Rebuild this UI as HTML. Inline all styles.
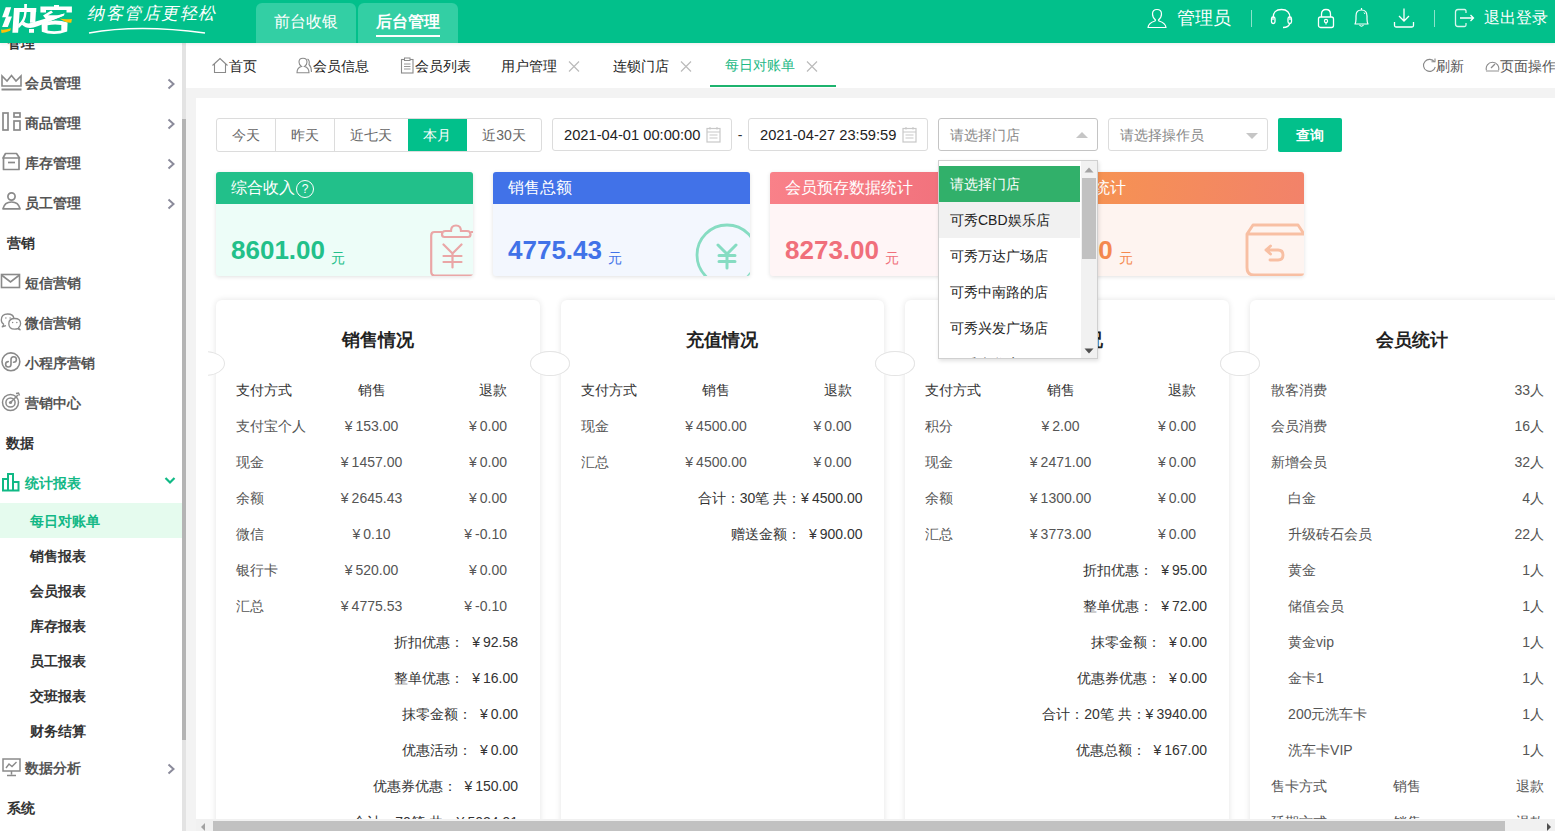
<!DOCTYPE html>
<html><head><meta charset="utf-8">
<style>
*{box-sizing:border-box;margin:0;padding:0}
html,body{width:1555px;height:831px;overflow:hidden;background:#fff;font-family:"Liberation Sans",sans-serif;font-size:14px;color:#333}
.a{position:absolute}
.t{position:absolute;white-space:nowrap;line-height:20px}
#hdr{left:0;top:0;width:1555px;height:43px;background:#02c08b;z-index:10;box-shadow:0 1px 3px rgba(0,0,0,.08)}
#side{left:0;top:0;width:182px;height:831px;background:#fff}
#sbar{left:182px;top:43px;width:4px;height:788px;background:#e3e3e3}
#sthumb{left:182px;top:119px;width:4px;height:621px;background:#b4b4b4}
#tabs{left:186px;top:43px;width:1369px;height:45px;background:#fff}
#gray{left:186px;top:88px;width:1369px;height:743px;background:#f3f3f3}
#panel{left:196px;top:98px;width:1359px;height:721px;background:#fff;overflow:hidden}
#hscroll{left:196px;top:819px;width:1359px;height:12px;background:#f1f1f1}
.side-i{color:#555;font-weight:bold}
.sec{color:#333;font-weight:bold}
.sub{color:#333;font-weight:bold}
.c{transform:translateX(-50%)}
.r{transform:translateX(-100%)}
.card{position:absolute;top:202px;width:323.7px;height:600px;background:#fff;border-radius:6px;box-shadow:0 0 6px rgba(0,0,0,.11)}
.notch{position:absolute;width:40px;height:25px;border-radius:50%;background:#fff;border:1px solid #e4e4e4;top:253px}
.sc{position:absolute;top:74px;width:257px;height:104px;border-radius:3px;overflow:hidden;box-shadow:0 1px 4px rgba(0,0,0,.12)}
.sch{position:absolute;left:0;top:0;width:257px;height:32px}
i{font-style:normal;margin-right:3px;font-size:14px}
.n{font-size:14.5px}
.dt{font-size:14.7px}
.inp{position:absolute;top:20px;height:33px;border:1px solid #dcdcdc;border-radius:3px;background:#fff}
</style></head><body>

<!-- HEADER -->
<div id="hdr" class="a">
  <svg class="a" style="left:0;top:0" width="80" height="43" viewBox="0 0 80 43">
<g fill="#fff">
<path d="M5.7 7.2 H11.2 L8.2 16.6 H12 L7.8 26.9 H2.1 L5.9 17.3 H2.1 Z"/>
<path d="M14 8 H20 L18.1 32.8 H12.4 Z"/>
<path d="M14 8 H36.2 V12 H14 Z"/>
<path d="M30.5 8 H36.2 L35.3 22.8 H30 Z"/>
<path d="M24.2 4 H27 L26.6 12.5 Q26 22 18.5 28.5 L18 24.5 Q24 20 24.2 12 Z"/>
<path d="M23.8 21.5 Q27 24.5 31.5 22.8 Q45 18.5 60 15 L64.5 13.5 L64 15.5 Q55 19 48 22 Q36 27.5 30 28 Q25.5 28 21.5 24.5 Z"/>
<path d="M29 29 H34 V32.8 H29 Z"/>
<path d="M40.4 6.5 H54 V5 H59 V6.5 H71.9 V12.4 H66.5 V10 H46 V12.4 H40.4 Z"/>
<path d="M43 15.5 L51.2 10.5 L53 12.5 L48 15.2 H58 L64.5 13.5 L63 16 L49 21.5 L47 20.5 Z"/>
<path d="M41.6 23.5 Q47 21 55 20.5 Q62 20.5 67.6 22.5 L67.2 31.5 Q60 34 54 34 Q47 34 41.8 31.8 Z M47.6 25.3 V30.5 Q54 32 61.3 30.5 V25 Q54 24 47.6 25.3 Z" fill-rule="evenodd"/>
</g>
<path d="M1 29.6 Q6 30 11 28.2 L10.2 30.8 Q6 32.8 1.5 33 Z" fill="#ffc107"/>
<path d="M59.6 18.6 Q64 19.5 71.9 19 L71.3 22.8 Q65.5 23 59.6 18.6 Z" fill="#ffc107"/>
</svg>
  <div class="t" style="left:87px;top:4px;font-size:17px;line-height:20px;color:#fff;letter-spacing:1.5px;font-style:italic;font-weight:300">纳客管店更轻松</div>
  <svg class="a" style="left:88px;top:26px" width="118" height="9"><path d="M1 7 Q 50 -2 117 7" stroke="#fff" stroke-width="1.6" fill="none"/></svg>
  <div class="a" style="left:256px;top:3px;width:100px;height:40px;background:#33cfa4;border-radius:6px 6px 0 0"></div>
  <div class="a" style="left:358px;top:3px;width:100px;height:40px;background:#33cfa4;border-radius:6px 6px 0 0"></div>
  <div class="t" style="left:274px;top:12px;font-size:16px;color:#fff;font-weight:500">前台收银</div>
  <div class="t" style="left:376px;top:12px;font-size:16px;color:#fff;font-weight:bold">后台管理</div>
  <div class="a" style="left:376px;top:35px;width:64px;height:2px;background:#fff"></div>
</div>



<div class="a" style="left:0;top:0;width:1555px;height:43px;z-index:11;pointer-events:none">
<svg class="a" style="left:1146px;top:8px" width="22" height="21" viewBox="0 0 22 21"><path d="M11 1.5 Q15.5 1.5 15.5 6 Q15.5 9.5 12.5 12 L13 13 Q19.5 15 20 19.5 H2 Q2.5 15 9 13 L9.5 12 Q6.5 9.5 6.5 6 Q6.5 1.5 11 1.5 Z" fill="none" stroke="#fff" stroke-width="1.2" stroke-linejoin="round"/></svg>
<div class="t" style="left:1177px;top:7px;font-size:18px;line-height:22px;color:#fff">管理员</div>
<div class="a" style="left:1251px;top:10px;width:1px;height:17px;background:rgba(255,255,255,.55)"></div>
<svg class="a" style="left:1270px;top:8px" width="23" height="21" viewBox="0 0 23 21"><path d="M3 12 V10 Q3 1.5 11.5 1.5 Q20 1.5 20 10 V12" fill="none" stroke="#fff" stroke-width="1.3"/><rect x="1.5" y="9" width="3.5" height="6.5" rx="1.7" fill="none" stroke="#fff" stroke-width="1.3"/><rect x="18" y="9" width="3.5" height="6.5" rx="1.7" fill="none" stroke="#fff" stroke-width="1.3"/><path d="M20 15 Q19 19.5 13 19.5" fill="none" stroke="#fff" stroke-width="1.3"/></svg>
<svg class="a" style="left:1317px;top:8px" width="18" height="21" viewBox="0 0 18 21"><path d="M4.5 9 V6 Q4.5 1.5 9 1.5 Q13.5 1.5 13.5 6 V9" fill="none" stroke="#fff" stroke-width="1.3"/><rect x="1.5" y="9" width="15" height="10.5" rx="2" fill="none" stroke="#fff" stroke-width="1.3"/><circle cx="9" cy="13" r="1.6" fill="none" stroke="#fff" stroke-width="1.2"/><path d="M9 14.6 V16.5" stroke="#fff" stroke-width="1.2"/></svg>
<svg class="a" style="left:1353px;top:7px" width="17" height="22" viewBox="0 0 17 22"><path d="M8.5 1 V2.5 M2 17 Q3 15 3 12 V9 Q3 3 8.5 3 Q14 3 14 9 V12 Q14 15 15 17 Z M6.5 18 Q8.5 20.5 10.5 18" fill="none" stroke="#fff" stroke-width="1.2" stroke-linejoin="round"/><path d="M11 5.5 L12 7" stroke="#fff" stroke-width="1"/></svg>
<svg class="a" style="left:1393px;top:7px" width="22" height="22" viewBox="0 0 22 22"><path d="M11 1.5 V14 M6 9 L11 14 L16 9" fill="none" stroke="#fff" stroke-width="1.3"/><path d="M1.5 15 V18.5 Q1.5 20 3 20 H19 Q20.5 20 20.5 18.5 V15" fill="none" stroke="#fff" stroke-width="1.3"/></svg>
<div class="a" style="left:1434px;top:10px;width:1px;height:17px;background:rgba(255,255,255,.55)"></div>
<svg class="a" style="left:1454px;top:8px" width="22" height="20" viewBox="0 0 22 20"><path d="M12 5 V3 Q12 1.5 10.5 1.5 H4 Q1.5 1.5 1.5 4 V16 Q1.5 18.5 4 18.5 H10.5 Q12 18.5 12 17 V15" fill="none" stroke="#fff" stroke-width="1.3" opacity=".85"/><path d="M6 10 H19.5 M16.5 7 L19.5 10 L16.5 13" fill="none" stroke="#fff" stroke-width="1.3"/></svg>
<div class="t" style="left:1484px;top:8px;font-size:16px;color:#fff">退出登录</div>
</div>

<div id="side" class="a"></div>
<div class="a" style="left:0;top:0;width:182px;height:831px;overflow:hidden">
  <div class="t sec" style="left:7px;top:33px">管理</div>
  <svg class="a" style="left:1px;top:74px" width="21" height="17" viewBox="0 0 21 17"><path d="M1 12 V2 L6 7 L10.5 1.5 L15 7 L20 2 V12 Z" fill="none" stroke="#8a8a8a" stroke-width="1.6"/><rect x="0.5" y="14.5" width="20" height="2" fill="#8a8a8a"/></svg>
  <div class="t side-i" style="left:25px;top:73px">会员管理</div>
  <svg class="a" style="left:167px;top:78px" width="9" height="12" viewBox="0 0 9 12"><path d="M1.5 1.5 L6.5 6 L1.5 10.5" fill="none" stroke="#8b8b9b" stroke-width="2"/></svg>
  <svg class="a" style="left:1px;top:112px" width="21" height="19" viewBox="0 0 21 19"><rect x="2" y="1" width="5" height="17" fill="none" stroke="#8a8a8a" stroke-width="1.7"/><rect x="13" y="1" width="6" height="4" fill="none" stroke="#8a8a8a" stroke-width="1.7"/><rect x="13" y="9" width="6" height="9" fill="none" stroke="#8a8a8a" stroke-width="1.7"/></svg>
  <div class="t side-i" style="left:25px;top:113px">商品管理</div>
  <svg class="a" style="left:167px;top:118px" width="9" height="12" viewBox="0 0 9 12"><path d="M1.5 1.5 L6.5 6 L1.5 10.5" fill="none" stroke="#8b8b9b" stroke-width="2"/></svg>
  <svg class="a" style="left:1px;top:152px" width="21" height="19" viewBox="0 0 21 19"><path d="M2 6 L4.5 1.5 H15.5 L18.5 6 Z" fill="none" stroke="#8a8a8a" stroke-width="1.7" stroke-linejoin="round"/><path d="M2.5 6 V17.5 H18 V6" fill="none" stroke="#8a8a8a" stroke-width="1.7" stroke-linejoin="round"/><path d="M7 10.5 H14" stroke="#8a8a8a" stroke-width="1.7"/></svg>
  <div class="t side-i" style="left:25px;top:153px">库存管理</div>
  <svg class="a" style="left:167px;top:158px" width="9" height="12" viewBox="0 0 9 12"><path d="M1.5 1.5 L6.5 6 L1.5 10.5" fill="none" stroke="#8b8b9b" stroke-width="2"/></svg>
  <svg class="a" style="left:1px;top:192px" width="21" height="18" viewBox="0 0 21 18"><circle cx="10.5" cy="4.5" r="3.6" fill="none" stroke="#8a8a8a" stroke-width="1.7"/><path d="M2 16.8 Q3.5 10 10.5 10 Q17.5 10 19 16.8 Z" fill="none" stroke="#8a8a8a" stroke-width="1.7" stroke-linejoin="round"/></svg>
  <div class="t side-i" style="left:25px;top:193px">员工管理</div>
  <svg class="a" style="left:167px;top:198px" width="9" height="12" viewBox="0 0 9 12"><path d="M1.5 1.5 L6.5 6 L1.5 10.5" fill="none" stroke="#8b8b9b" stroke-width="2"/></svg>

  <div class="t sec" style="left:7px;top:233px">营销</div>
  <svg class="a" style="left:0px;top:273px" width="21" height="16" viewBox="0 0 21 16"><rect x="1.5" y="1.5" width="18" height="13" fill="none" stroke="#8a8a8a" stroke-width="1.6"/><path d="M1.5 2 L10.5 9 L19.5 2" fill="none" stroke="#8a8a8a" stroke-width="1.6"/></svg>
  <div class="t side-i" style="left:25px;top:273px">短信营销</div>
  <svg class="a" style="left:0px;top:313px" width="22" height="18" viewBox="0 0 22 18"><path d="M4 11.5 Q1.3 10 1.3 7 Q1.3 1 7.6 1 Q13.5 1 13.9 5.5 M4 11.5 L2.2 13.8 L6 12.6" fill="none" stroke="#8a8a8a" stroke-width="1.3" stroke-linejoin="round"/><path d="M18.5 14.8 Q20.6 13 20.6 10.8 Q20.6 5.5 14.7 5.5 Q8.8 5.5 8.8 10.8 Q8.8 16.2 14.7 16.2 Q16.5 16.2 17.5 15.7 L20.2 16.8 Z" fill="#fff" stroke="#8a8a8a" stroke-width="1.3" stroke-linejoin="round"/><circle cx="5.9" cy="5" r=".75" fill="#8a8a8a"/><circle cx="10.1" cy="5" r=".75" fill="#8a8a8a"/><circle cx="12.6" cy="9.6" r=".75" fill="#8a8a8a"/><circle cx="16.8" cy="9.6" r=".75" fill="#8a8a8a"/></svg>
  <div class="t side-i" style="left:25px;top:313px">微信营销</div>
  <svg class="a" style="left:0px;top:352px" width="22" height="21" viewBox="0 0 22 21"><circle cx="10.9" cy="9.8" r="8.9" fill="none" stroke="#8a8a8a" stroke-width="1.6"/><path d="M8.3 9.6 Q5.6 9.6 5.6 12.3 Q5.6 15 8.3 15 Q11 15 11 12.3 V7.5 Q11 4.8 13.7 4.8 Q16.4 4.8 16.4 7.5 Q16.4 10.2 13.5 10.2" fill="none" stroke="#8a8a8a" stroke-width="1.6" stroke-linecap="round"/></svg>
  <div class="t side-i" style="left:25px;top:353px">小程序营销</div>
  <svg class="a" style="left:1px;top:392px" width="21" height="20" viewBox="0 0 21 20"><circle cx="9.5" cy="10.5" r="8" fill="none" stroke="#8a8a8a" stroke-width="1.5"/><circle cx="9.5" cy="10.5" r="4.6" fill="none" stroke="#8a8a8a" stroke-width="1.5"/><circle cx="9.5" cy="10.5" r="1.6" fill="#8a8a8a"/><path d="M9.5 10.5 L17 3 M15 1.5 L17.5 1 L18.5 3.5" fill="none" stroke="#8a8a8a" stroke-width="1.5"/></svg>
  <div class="t side-i" style="left:25px;top:393px">营销中心</div>

  <div class="t sec" style="left:6px;top:433px">数据</div>
  <svg class="a" style="left:1px;top:472px" width="21" height="20" viewBox="0 0 21 20"><path d="M2 18.5 V7 H7 V18.5 Z M7 18.5 V2 H12 V18.5 Z M12 18.5 V10 H17.5 V18.5 Z" fill="none" stroke="#10b985" stroke-width="2"/></svg>
  <div class="t" style="left:25px;top:473px;color:#13b886;font-weight:bold">统计报表</div>
  <svg class="a" style="left:164px;top:476px" width="12" height="9" viewBox="0 0 12 9"><path d="M1.5 2 L6 6.5 L10.5 2" fill="none" stroke="#10b985" stroke-width="2.2"/></svg>
  <div class="a" style="left:0;top:503px;width:182px;height:35px;background:#e5fbee"></div>
  <div class="t" style="left:30px;top:511px;color:#13b886;font-weight:bold">每日对账单</div>
  <div class="t sub" style="left:30px;top:546px">销售报表</div>
  <div class="t sub" style="left:30px;top:581px">会员报表</div>
  <div class="t sub" style="left:30px;top:616px">库存报表</div>
  <div class="t sub" style="left:30px;top:651px">员工报表</div>
  <div class="t sub" style="left:30px;top:686px">交班报表</div>
  <div class="t sub" style="left:30px;top:721px">财务结算</div>
  <svg class="a" style="left:2px;top:758px" width="19" height="19" viewBox="0 0 19 19"><rect x="1" y="1" width="17" height="12" fill="none" stroke="#8a8a8a" stroke-width="1.5"/><path d="M4 10 L7 6 L10 8.5 L14.5 4" fill="none" stroke="#8a8a8a" stroke-width="1.4"/><path d="M9.5 13 V16.5 M5 17.5 H14" stroke="#8a8a8a" stroke-width="1.5"/></svg>
  <div class="t side-i" style="left:25px;top:758px">数据分析</div>
  <svg class="a" style="left:167px;top:763px" width="9" height="12" viewBox="0 0 9 12"><path d="M1.5 1.5 L6.5 6 L1.5 10.5" fill="none" stroke="#8b8b9b" stroke-width="2"/></svg>
  <div class="t sec" style="left:7px;top:798px">系统</div>
</div>

<div id="sbar" class="a"></div><div id="sthumb" class="a"></div>

<div id="tabs" class="a"></div>
<svg class="a" style="left:211px;top:57px" width="18" height="17" viewBox="0 0 18 17"><path d="M1.5 8.5 L9 1.5 L16.5 8.5 M3.5 7 V15.5 H14.5 V7" fill="none" stroke="#8a8a8a" stroke-width="1.1"/></svg>
<div class="t" style="left:229px;top:56px;color:#222">首页</div>
<svg class="a" style="left:296px;top:57px" width="17" height="17" viewBox="0 0 17 17"><path d="M7 1.2 Q11 1.2 11 5 Q11 8 8.5 9.5 Q13 10.5 13 15.8 H1 Q1 10.5 5.5 9.5 Q3 8 3 5 Q3 1.2 7 1.2 Z" fill="none" stroke="#8a8a8a" stroke-width="1.1"/><path d="M11.5 2 Q14 3.5 13 7.5 Q15.5 10 15.5 15" fill="none" stroke="#8a8a8a" stroke-width="1.1"/></svg>
<div class="t" style="left:313px;top:56px;color:#222">会员信息</div>
<svg class="a" style="left:400px;top:57px" width="15" height="17" viewBox="0 0 15 17"><rect x="1.5" y="2.5" width="11.5" height="13.5" fill="none" stroke="#8a8a8a" stroke-width="1.1"/><rect x="4.5" y="1" width="5.5" height="2.5" fill="#fff" stroke="#8a8a8a" stroke-width="1"/><path d="M4 7 H10.5 M4 9.5 H10.5 M4 12 H10.5" stroke="#8a8a8a" stroke-width=".9"/></svg>
<div class="t" style="left:415px;top:56px;color:#222">会员列表</div>
<div class="t" style="left:501px;top:56px;color:#222">用户管理</div>
<svg class="a" style="left:568px;top:61px" width="12" height="11" viewBox="0 0 12 11"><path d="M1 0.5 L11 10.5 M11 0.5 L1 10.5" stroke="#bbb" stroke-width="1.2"/></svg>
<div class="t" style="left:613px;top:56px;color:#222">连锁门店</div>
<svg class="a" style="left:680px;top:61px" width="12" height="11" viewBox="0 0 12 11"><path d="M1 0.5 L11 10.5 M11 0.5 L1 10.5" stroke="#bbb" stroke-width="1.2"/></svg>
<div class="t" style="left:725px;top:55px;color:#1db985">每日对账单</div>
<svg class="a" style="left:806px;top:61px" width="12" height="11" viewBox="0 0 12 11"><path d="M1 0.5 L11 10.5 M11 0.5 L1 10.5" stroke="#bbb" stroke-width="1.2"/></svg>
<div class="a" style="left:710px;top:85px;width:126px;height:2px;background:#1db36e"></div>
<svg class="a" style="left:1422px;top:58px" width="15" height="15" viewBox="0 0 15 15"><path d="M12.5 4 A6 6 0 1 0 13.3 9" fill="none" stroke="#8a8a8a" stroke-width="1.1"/><path d="M9.5 3.8 H13 V0.5" fill="none" stroke="#8a8a8a" stroke-width="1.1"/></svg>
<div class="t" style="left:1436px;top:56px;color:#555">刷新</div>
<svg class="a" style="left:1485px;top:58px" width="15" height="15" viewBox="0 0 15 15"><path d="M1.5 12.5 A6.3 6.3 0 1 1 13.5 12.5" fill="none" stroke="#8a8a8a" stroke-width="1.1"/><path d="M1 13 H14" stroke="#bbb" stroke-width="1.6"/><path d="M6 10 L10 6" stroke="#8a8a8a" stroke-width="1.2"/></svg>
<div class="t" style="left:1500px;top:56px;color:#555">页面操作</div>
<div id="gray" class="a"></div>

<div id="panel" class="a"><div class="a" style="left:20px;top:20px;width:326px;height:34px;border:1px solid #dcdcdc;border-radius:3px;overflow:hidden"><div class="a" style="left:58px;top:0;width:1px;height:32px;background:#dcdcdc"></div><div class="a" style="left:117px;top:0;width:1px;height:32px;background:#dcdcdc"></div><div class="a" style="left:191px;top:-1px;width:59px;height:34px;background:#02c08b"></div></div>
<div class="t c" style="left:50px;top:27.0px;line-height:20px;color:#666">今天</div>
<div class="t c" style="left:109px;top:27.0px;line-height:20px;color:#666">昨天</div>
<div class="t c" style="left:175px;top:27.0px;line-height:20px;color:#666">近七天</div>
<div class="t c" style="left:241px;top:27.0px;line-height:20px;color:#fff">本月</div>
<div class="t c" style="left:308px;top:27.0px;line-height:20px;color:#666">近30天</div>
<div class="inp" style="left:356px;width:180px"></div>
<div class="t dt" style="left:368px;top:27.0px;line-height:20px;color:#222">2021-04-01 00:00:00</div>
<svg class="a" style="left:510px;top:28px" width="15" height="17" viewBox="0 0 15 17"><rect x="1" y="2.5" width="13" height="13.5" fill="none" stroke="#c8c8c8" stroke-width="1.2"/><path d="M1 6 H14 M4 1 V3.5 M11 1 V3.5 M3.5 9 H11.5 M3.5 12 H11.5" stroke="#c8c8c8" stroke-width="1.1"/></svg>
<div class="t c" style="left:544px;top:27.0px;line-height:20px;color:#333">-</div>
<div class="inp" style="left:552px;width:180px"></div>
<div class="t dt" style="left:564px;top:27.0px;line-height:20px;color:#222">2021-04-27 23:59:59</div>
<svg class="a" style="left:706px;top:28px" width="15" height="17" viewBox="0 0 15 17"><rect x="1" y="2.5" width="13" height="13.5" fill="none" stroke="#c8c8c8" stroke-width="1.2"/><path d="M1 6 H14 M4 1 V3.5 M11 1 V3.5 M3.5 9 H11.5 M3.5 12 H11.5" stroke="#c8c8c8" stroke-width="1.1"/></svg>
<div class="inp" style="left:742px;width:160px;border-color:#c4c4c4"></div>
<div class="t" style="left:754px;top:27.0px;line-height:20px;color:#888">请选择门店</div>
<svg class="a" style="left:879px;top:33px" width="14" height="8"><path d="M1 7 L7 1 L13 7 Z" fill="#c6c6c6"/></svg>
<div class="inp" style="left:912px;width:160px"></div>
<div class="t" style="left:924px;top:27.0px;line-height:20px;color:#888">请选择操作员</div>
<svg class="a" style="left:1049px;top:34px" width="14" height="8"><path d="M1 1 L7 7 L13 1 Z" fill="#c6c6c6"/></svg>
<div class="a" style="left:1082px;top:20px;width:64px;height:34px;background:#02c08b;border-radius:2px"></div>
<div class="t c" style="left:1114px;top:27.0px;line-height:20px;color:#fff;font-weight:bold">查询</div>
<div class="sc" style="left:20px;background:#edfdf8"><div class="sch" style="background:linear-gradient(100deg,#22c08a,#22c08a)"></div><div class="t" style="left:15px;top:6px;font-size:16px;color:#fff">综合收入</div><div class="a" style="left:80px;top:8px;width:18px;height:18px;border:1px solid #fff;border-radius:50%;color:#fff;font-size:12px;line-height:16px;text-align:center">?</div><svg class="a" style="left:214px;top:52px" width="44" height="53" viewBox="0 0 44 53"><path d="M12 8 H4.5 Q1.2 8 1.2 11.5 V48 Q1.2 51.5 4.5 51.5 H44 M40.5 8 H44" fill="none" stroke="#eaa6a6" stroke-width="2.2"/><path d="M14.5 13 H38 Q40.5 13 40.5 10.5 Q40.5 7 37 7 H31 Q31 1.5 26 1.5 Q21 1.5 21 7 H15.5 Q12 7 12 10.5 Q12 13 14.5 13 Z" fill="none" stroke="#eaa6a6" stroke-width="2.2"/><path d="M13.5 20.5 L22.5 29.5 L31.5 20.5 M22.5 29.5 V43.5 M13.5 32 H31.5 M13.5 38 H31.5" fill="none" stroke="#eaa6a6" stroke-width="2.2" stroke-linecap="round"/></svg><div class="t" style="left:15px;top:63px;font-size:26px;line-height:30px;font-weight:bold;color:#22c08a">8601.00<span style="font-size:14px;font-weight:normal;margin-left:6px;position:relative;top:4px">元</span></div></div>
<div class="sc" style="left:297px;background:#f3f7fe"><div class="sch" style="background:linear-gradient(100deg,#4172e8,#4172e8)"></div><div class="t" style="left:15px;top:6px;font-size:16px;color:#fff">销售总额</div><svg class="a" style="left:200px;top:50px" width="60" height="60" viewBox="0 0 60 60"><circle cx="34" cy="33" r="30" fill="none" stroke="#86dcc2" stroke-width="2.8"/><path d="M25 23 L34 32 L43 23 M34 32 V46 M26 33.5 H42 M26 39.5 H42" fill="none" stroke="#86dcc2" stroke-width="3" stroke-linecap="round"/></svg><div class="t" style="left:15px;top:63px;font-size:26px;line-height:30px;font-weight:bold;color:#4172e8">4775.43<span style="font-size:14px;font-weight:normal;margin-left:6px;position:relative;top:4px">元</span></div></div>
<div class="sc" style="left:574px;background:#fff5f6"><div class="sch" style="background:linear-gradient(100deg,#f98189,#ee6b77)"></div><div class="t" style="left:15px;top:6px;font-size:16px;color:#fff">会员预存数据统计</div><div class="t" style="left:15px;top:63px;font-size:26px;line-height:30px;font-weight:bold;color:#f06f7b">8273.00<span style="font-size:14px;font-weight:normal;margin-left:6px;position:relative;top:4px">元</span></div></div>
<div class="sc" style="left:851px;background:#fef4f0"><div class="sch" style="background:linear-gradient(100deg,#f7964d,#f2826a)"></div><div class="t" style="left:15px;top:6px;font-size:16px;color:#fff">退款统计</div><svg class="a" style="left:198px;top:51px" width="60" height="54" viewBox="0 0 60 54"><path d="M2 44.5 V11 L8 2 H53 L59 11 M2 11 H60 M2 44.5 Q2 52 9 52 H60" fill="none" stroke="#f8bfa3" stroke-width="2.9" stroke-linejoin="round"/><path d="M21 27 L25.5 23 M21 27 L25.5 31 M21 27 H33 Q38 27 38 32 Q38 37 33 37 H25" fill="none" stroke="#f8bfa3" stroke-width="2.9" stroke-linecap="round" stroke-linejoin="round"/></svg><div class="t" style="left:15px;top:63px;font-size:26px;line-height:30px;font-weight:bold;color:#f5894f">0.00<span style="font-size:14px;font-weight:normal;margin-left:6px;position:relative;top:4px">元</span></div></div>
<div class="card" style="left:20px"></div>
<div class="card" style="left:364.70000000000005px"></div>
<div class="card" style="left:709.4px"></div>
<div class="card" style="left:1054.1px"></div>
<div class="a" style="left:12px;top:250px;width:17px;height:29px;overflow:hidden"><div class="notch" style="left:-23px;top:3px"></div></div>
<div class="notch" style="left:334.2px"></div>
<div class="notch" style="left:334.20000000000005px"></div>
<div class="notch" style="left:678.9000000000001px"></div>
<div class="notch" style="left:678.9px"></div>
<div class="notch" style="left:1023.5999999999999px"></div>
<div class="notch" style="left:1023.5999999999999px"></div>
<div class="notch" style="left:1368.3px"></div>
<div class="t c" style="left:181.5px;top:230.0px;line-height:24px;font-size:17.5px;font-weight:bold;color:#222">销售情况</div>
<div class="t" style="left:40px;top:282.0px;line-height:20px;color:#333">支付方式</div>
<div class="t c" style="left:175.5px;top:282.0px;line-height:20px;color:#333">销售</div>
<div class="t r" style="left:311px;top:282.0px;line-height:20px;color:#333">退款</div>
<div class="t" style="left:40px;top:318.0px;line-height:20px;color:#555">支付宝个人</div>
<div class="t c" style="left:175.5px;top:318.0px;line-height:20px;color:#555"><i>¥</i>153.00</div>
<div class="t r" style="left:311px;top:318.0px;line-height:20px;color:#555"><i>¥</i>0.00</div>
<div class="t" style="left:40px;top:354.0px;line-height:20px;color:#555">现金</div>
<div class="t c" style="left:175.5px;top:354.0px;line-height:20px;color:#555"><i>¥</i>1457.00</div>
<div class="t r" style="left:311px;top:354.0px;line-height:20px;color:#555"><i>¥</i>0.00</div>
<div class="t" style="left:40px;top:390.0px;line-height:20px;color:#555">余额</div>
<div class="t c" style="left:175.5px;top:390.0px;line-height:20px;color:#555"><i>¥</i>2645.43</div>
<div class="t r" style="left:311px;top:390.0px;line-height:20px;color:#555"><i>¥</i>0.00</div>
<div class="t" style="left:40px;top:426.0px;line-height:20px;color:#555">微信</div>
<div class="t c" style="left:175.5px;top:426.0px;line-height:20px;color:#555"><i>¥</i>0.10</div>
<div class="t r" style="left:311px;top:426.0px;line-height:20px;color:#555"><i>¥</i>-0.10</div>
<div class="t" style="left:40px;top:462.0px;line-height:20px;color:#555">银行卡</div>
<div class="t c" style="left:175.5px;top:462.0px;line-height:20px;color:#555"><i>¥</i>520.00</div>
<div class="t r" style="left:311px;top:462.0px;line-height:20px;color:#555"><i>¥</i>0.00</div>
<div class="t" style="left:40px;top:498.0px;line-height:20px;color:#555">汇总</div>
<div class="t c" style="left:175.5px;top:498.0px;line-height:20px;color:#555"><i>¥</i>4775.53</div>
<div class="t r" style="left:311px;top:498.0px;line-height:20px;color:#555"><i>¥</i>-0.10</div>
<div class="t r" style="left:322px;top:534.0px;line-height:20px;color:#333">折扣优惠：&nbsp; <i>¥</i>92.58</div>
<div class="t r" style="left:322px;top:570.0px;line-height:20px;color:#333">整单优惠：&nbsp; <i>¥</i>16.00</div>
<div class="t r" style="left:322px;top:606.0px;line-height:20px;color:#333">抹零金额：&nbsp; <i>¥</i>0.00</div>
<div class="t r" style="left:322px;top:642.0px;line-height:20px;color:#333">优惠活动：&nbsp; <i>¥</i>0.00</div>
<div class="t r" style="left:322px;top:678.0px;line-height:20px;color:#333">优惠券优惠：&nbsp; <i>¥</i>150.00</div>
<div class="t r" style="left:322px;top:714.0px;line-height:20px;color:#333">合计：70笔 共：<i>¥</i>5024.91</div>
<div class="t c" style="left:526.0px;top:230.0px;line-height:24px;font-size:17.5px;font-weight:bold;color:#222">充值情况</div>
<div class="t" style="left:384.5px;top:282.0px;line-height:20px;color:#333">支付方式</div>
<div class="t c" style="left:520.0px;top:282.0px;line-height:20px;color:#333">销售</div>
<div class="t r" style="left:655.5px;top:282.0px;line-height:20px;color:#333">退款</div>
<div class="t" style="left:384.5px;top:318.0px;line-height:20px;color:#555">现金</div>
<div class="t c" style="left:520.0px;top:318.0px;line-height:20px;color:#555"><i>¥</i>4500.00</div>
<div class="t r" style="left:655.5px;top:318.0px;line-height:20px;color:#555"><i>¥</i>0.00</div>
<div class="t" style="left:384.5px;top:354.0px;line-height:20px;color:#555">汇总</div>
<div class="t c" style="left:520.0px;top:354.0px;line-height:20px;color:#555"><i>¥</i>4500.00</div>
<div class="t r" style="left:655.5px;top:354.0px;line-height:20px;color:#555"><i>¥</i>0.00</div>
<div class="t r" style="left:666.5px;top:390.0px;line-height:20px;color:#333">合计：30笔 共：<i>¥</i>4500.00</div>
<div class="t r" style="left:666.5px;top:426.0px;line-height:20px;color:#333">赠送金额：&nbsp; <i>¥</i>900.00</div>
<div class="t c" style="left:870.5px;top:230.0px;line-height:24px;font-size:17.5px;font-weight:bold;color:#222">消费情况</div>
<div class="t" style="left:729px;top:282.0px;line-height:20px;color:#333">支付方式</div>
<div class="t c" style="left:864.5px;top:282.0px;line-height:20px;color:#333">销售</div>
<div class="t r" style="left:1000px;top:282.0px;line-height:20px;color:#333">退款</div>
<div class="t" style="left:729px;top:318.0px;line-height:20px;color:#555">积分</div>
<div class="t c" style="left:864.5px;top:318.0px;line-height:20px;color:#555"><i>¥</i>2.00</div>
<div class="t r" style="left:1000px;top:318.0px;line-height:20px;color:#555"><i>¥</i>0.00</div>
<div class="t" style="left:729px;top:354.0px;line-height:20px;color:#555">现金</div>
<div class="t c" style="left:864.5px;top:354.0px;line-height:20px;color:#555"><i>¥</i>2471.00</div>
<div class="t r" style="left:1000px;top:354.0px;line-height:20px;color:#555"><i>¥</i>0.00</div>
<div class="t" style="left:729px;top:390.0px;line-height:20px;color:#555">余额</div>
<div class="t c" style="left:864.5px;top:390.0px;line-height:20px;color:#555"><i>¥</i>1300.00</div>
<div class="t r" style="left:1000px;top:390.0px;line-height:20px;color:#555"><i>¥</i>0.00</div>
<div class="t" style="left:729px;top:426.0px;line-height:20px;color:#555">汇总</div>
<div class="t c" style="left:864.5px;top:426.0px;line-height:20px;color:#555"><i>¥</i>3773.00</div>
<div class="t r" style="left:1000px;top:426.0px;line-height:20px;color:#555"><i>¥</i>0.00</div>
<div class="t r" style="left:1011px;top:462.0px;line-height:20px;color:#333">折扣优惠：&nbsp; <i>¥</i>95.00</div>
<div class="t r" style="left:1011px;top:498.0px;line-height:20px;color:#333">整单优惠：&nbsp; <i>¥</i>72.00</div>
<div class="t r" style="left:1011px;top:534.0px;line-height:20px;color:#333">抹零金额：&nbsp; <i>¥</i>0.00</div>
<div class="t r" style="left:1011px;top:570.0px;line-height:20px;color:#333">优惠券优惠：&nbsp; <i>¥</i>0.00</div>
<div class="t r" style="left:1011px;top:606.0px;line-height:20px;color:#333">合计：20笔 共：<i>¥</i>3940.00</div>
<div class="t r" style="left:1011px;top:642.0px;line-height:20px;color:#333">优惠总额：&nbsp; <i>¥</i>167.00</div>
<div class="t c" style="left:1215.6px;top:230.0px;line-height:24px;font-size:17.5px;font-weight:bold;color:#222">会员统计</div>
<div class="t" style="left:1075.1px;top:282.0px;line-height:20px;color:#555">散客消费</div>
<div class="t r" style="left:1348.1px;top:282.0px;line-height:20px;color:#555">33人</div>
<div class="t" style="left:1075.1px;top:318.0px;line-height:20px;color:#555">会员消费</div>
<div class="t r" style="left:1348.1px;top:318.0px;line-height:20px;color:#555">16人</div>
<div class="t" style="left:1075.1px;top:354.0px;line-height:20px;color:#555">新增会员</div>
<div class="t r" style="left:1348.1px;top:354.0px;line-height:20px;color:#555">32人</div>
<div class="t" style="left:1092.1px;top:390.0px;line-height:20px;color:#555">白金</div>
<div class="t r" style="left:1348.1px;top:390.0px;line-height:20px;color:#555">4人</div>
<div class="t" style="left:1092.1px;top:426.0px;line-height:20px;color:#555">升级砖石会员</div>
<div class="t r" style="left:1348.1px;top:426.0px;line-height:20px;color:#555">22人</div>
<div class="t" style="left:1092.1px;top:462.0px;line-height:20px;color:#555">黄金</div>
<div class="t r" style="left:1348.1px;top:462.0px;line-height:20px;color:#555">1人</div>
<div class="t" style="left:1092.1px;top:498.0px;line-height:20px;color:#555">储值会员</div>
<div class="t r" style="left:1348.1px;top:498.0px;line-height:20px;color:#555">1人</div>
<div class="t" style="left:1092.1px;top:534.0px;line-height:20px;color:#555">黄金vip</div>
<div class="t r" style="left:1348.1px;top:534.0px;line-height:20px;color:#555">1人</div>
<div class="t" style="left:1092.1px;top:570.0px;line-height:20px;color:#555">金卡1</div>
<div class="t r" style="left:1348.1px;top:570.0px;line-height:20px;color:#555">1人</div>
<div class="t" style="left:1092.1px;top:606.0px;line-height:20px;color:#555">200元洗车卡</div>
<div class="t r" style="left:1348.1px;top:606.0px;line-height:20px;color:#555">1人</div>
<div class="t" style="left:1092.1px;top:642.0px;line-height:20px;color:#555">洗车卡VIP</div>
<div class="t r" style="left:1348.1px;top:642.0px;line-height:20px;color:#555">1人</div>
<div class="t" style="left:1075.1px;top:678.0px;line-height:20px;color:#555">售卡方式</div>
<div class="t c" style="left:1211.1px;top:678.0px;line-height:20px;color:#555">销售</div>
<div class="t r" style="left:1348.1px;top:678.0px;line-height:20px;color:#555">退款</div>
<div class="t" style="left:1075.1px;top:714.0px;line-height:20px;color:#555">延期方式</div>
<div class="t c" style="left:1211.1px;top:714.0px;line-height:20px;color:#555">销售</div>
<div class="t r" style="left:1348.1px;top:714.0px;line-height:20px;color:#555">退款</div>
<div class="a" style="left:742px;top:62px;width:160px;height:199px;background:#fff;border:1px solid #d0d0d0;box-shadow:1px 2px 4px rgba(0,0,0,.12);overflow:hidden">
<div class="a" style="left:0;top:5px;width:141px;height:36px;background:#31b06a"></div>
<div class="a" style="left:0;top:41px;width:141px;height:36px;background:#f1f1f1"></div>
<div class="t" style="left:11px;top:13px;color:#fff">请选择门店</div>
<div class="t" style="left:11px;top:49px;color:#222">可秀CBD娱乐店</div>
<div class="t" style="left:11px;top:85px;color:#222">可秀万达广场店</div>
<div class="t" style="left:11px;top:121px;color:#222">可秀中南路的店</div>
<div class="t" style="left:11px;top:157px;color:#222">可秀兴发广场店</div>
<div class="t" style="left:11px;top:193px;color:#222">可秀光谷店</div>
<div class="a" style="left:142px;top:0;width:16px;height:197px;background:#f1f1f1"></div>
<div class="a" style="left:143px;top:17px;width:14px;height:81px;background:#c1c1c1"></div>
<svg class="a" style="left:145px;top:6px" width="10" height="6"><path d="M0.5 5.5 L5 0.5 L9.5 5.5Z" fill="#a3a3a3"/></svg>
<svg class="a" style="left:145px;top:187px" width="10" height="6"><path d="M0.5 0.5 L5 5.5 L9.5 0.5Z" fill="#505050"/></svg>
</div></div>
<div id="hscroll" class="a"><svg class="a" style="left:4px;top:4px" width="6" height="8"><path d="M5 0 L1 4 L5 8Z" fill="#a3a3a3"/></svg><div class="a" style="left:17px;top:2px;width:1292px;height:10px;background:#c1c1c1"></div><svg class="a" style="left:1350px;top:4px" width="6" height="8"><path d="M1 0 L5 4 L1 8Z" fill="#505050"/></svg></div>
</body></html>
